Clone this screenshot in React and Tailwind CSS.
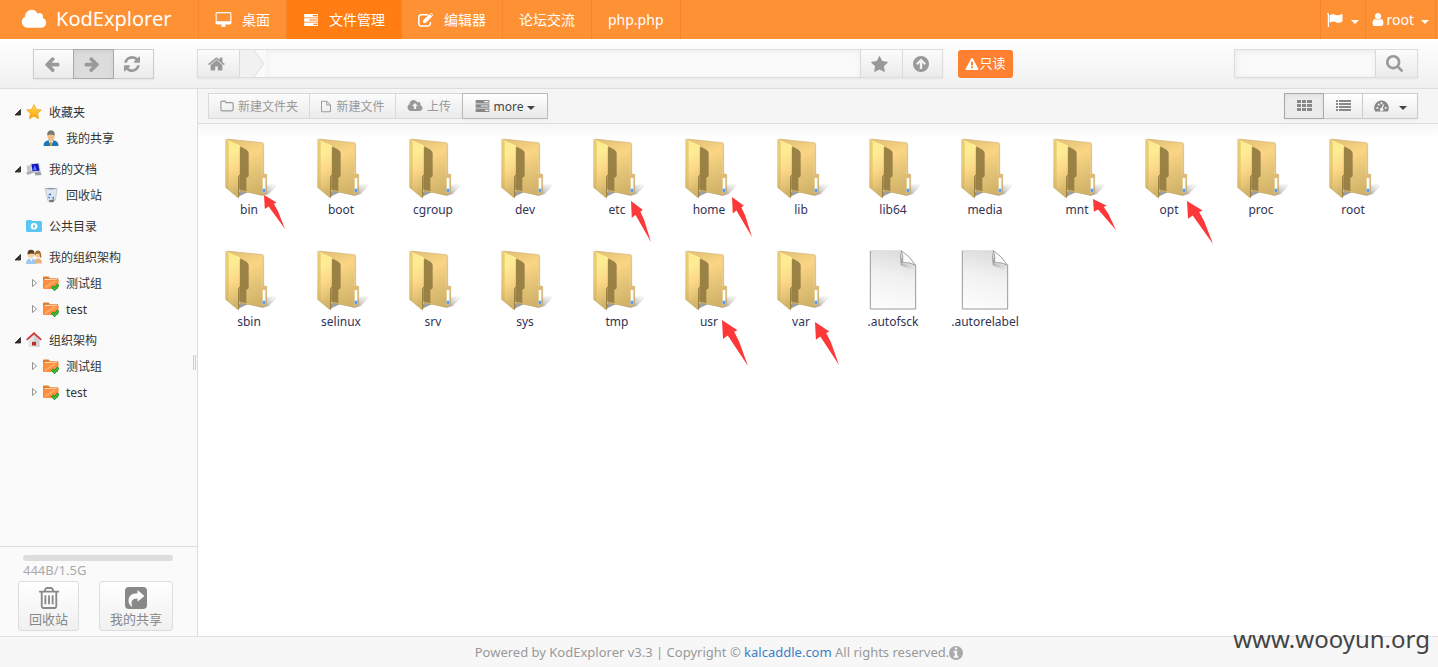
import React from "react";

const FONT = "font-['Noto_Sans','Noto_Sans_CJK_SC',sans-serif]";

const GLYPHS = {
  cloud: ["0 0 2048 1792", "M1984 1152q0 159-112.5 271.5t-271.5 112.5h-1088q-185 0-316.5-131.5t-131.5-316.5q0-132 71-241.5t187-163.5q-2-28-2-43 0-212 150-362t362-150q158 0 286.5 88t187.5 230q70-62 166-62 106 0 181 75t75 181q0 75-41 138 129 30 213 134.5t84 239.5z"],
  cloudUpload: ["0 128 2048 1536", "M1984 1152q0 159-112.5 271.5t-271.5 112.5h-1088q-185 0-316.5-131.5t-131.5-316.5q0-132 71-241.5t187-163.5q-2-28-2-43 0-212 150-362t362-150q158 0 286.5 88t187.5 230q70-62 166-62 106 0 181 75t75 181q0 75-41 138 129 30 213 134.5t84 239.5zM1024 500L660 890H880V1280H1168V890H1388Z"],
  desktop: ["0 0 1920 1792", "M1728 992v-832q0-13-9.5-22.5t-22.5-9.5h-1472q-13 0-22.5 9.5t-9.5 22.5v832q0 13 9.5 22.5t22.5 9.5h1472q13 0 22.5-9.5t9.5-22.5zm128-832v1088q0 66-47 113t-113 47h-544q0 37 16 77.5t32 71 16 43.5q0 26-19 45t-45 19h-384q-26 0-45-19t-19-45q0-14 16-44t32-70 16-78h-544q-66 0-113-47t-47-113v-1088q0-66 47-113t113-47h1472q66 0 113 47t47 113z"],
  tasks: ["0 0 16 14", "M0 0H16V4H0ZM10 1.3V2.7H15V1.3ZM0 5H16V9H0ZM6 6.3V7.7H15V6.3ZM0 10H16V14H0ZM11 11.3V12.7H15V11.3Z"],
  left: ["64 64 1664 1664", "M1664 896v128q0 53-32.5 90.5t-84.5 37.5h-704l293 294q38 36 38 90t-38 90l-75 76q-37 37-90 37-52 0-91-37l-651-652q-37-37-37-90 0-52 37-91l651-650q38-38 91-38 52 0 90 38l75 74q38 38 38 91t-38 91l-293 293h704q52 0 84.5 37.5t32.5 90.5z"],
  right: ["64 64 1664 1664", "M1600 960q0 54-37 91l-651 651q-39 37-91 37-51 0-90-37l-75-75q-38-38-38-91t38-91l293-293h-704q-52 0-84.5-37.5t-32.5-90.5v-128q0-53 32.5-90.5t84.5-37.5h704l-293-294q-38-36-38-90t38-90l75-75q38-38 90-38 53 0 91 38l651 651q37 35 37 90z"],
  refresh: ["128 128 1536 1536", "M1639 1056q0 5-1 7-64 268-268 434.5t-478 166.5q-146 0-282.5-55t-243.5-157l-129 129q-19 19-45 19t-45-19-19-45v-448q0-26 19-45t45-19h448q26 0 45 19t19 45-19 45l-137 137q71 66 161 102t187 36q134 0 250-65t186-179q11-17 53-117 8-23 30-23h192q13 0 22.5 9.5t9.5 22.5zm25-800v448q0 26-19 45t-45 19h-448q-26 0-45-19t-19-45 19-45l138-138q-148-137-349-137-134 0-250 65t-186 179q-11 17-53 117-8 23-30 23h-199q-13 0-22.5-9.5t-9.5-22.5v-7q65-268 270-434.5t480-166.5q146 0 284 55.5t245 156.5l130-129q19-19 45-19t45 19 19 45z"],
  home: ["64 128 1664 1536", "M1472 992v480q0 26-19 45t-45 19h-384v-384h-256v384h-384q-26 0-45-19t-19-45v-480q0-1 .5-3t.5-3l575-474 575 474q1 2 1 6zm223-69l-62 74q-8 9-21 11h-3q-13 0-21-7l-692-577-692 577q-12 8-24 7-13-2-21-11l-62-74q-8-10-7-23.5t11-21.5l719-599q32-26 76-26t76 26l244 204v-195q0-14 9-23t23-9h192q14 0 23 9t9 23v408l219 182q10 8 11 21.5t-7 23.5z"],
  star: ["64 32 1664 1600", "M1728 647q0 22-26 48l-363 354 86 500q1 7 1 20 0 21-10.5 35.5t-30.5 14.5q-19 0-40-12l-449-236-449 236q-22 12-40 12-21 0-31.5-14.5t-10.5-35.5q0-6 2-20l86-500-364-354q-25-27-25-48 0-37 56-46l502-73 225-455q19-41 49-41t49 41l225 455 502 73q56 9 56 46z"],
  up: ["0 0 16 16", "M8 0a8 8 0 1 0 0 16a8 8 0 0 0 0-16ZM8 2.5L13 7.5L11.5 9L9.2 6.8V13H6.8V6.8L4.5 9L3 7.5Z"],
  search: ["64 128 1664 1664", "M1216 832q0-185-131.5-316.5t-316.5-131.5-316.5 131.5-131.5 316.5 131.5 316.5 316.5 131.5 316.5-131.5 131.5-316.5zm512 832q0 52-38 90t-90 38q-54 0-90-38l-343-342q-179 124-399 124-143 0-273.5-55.5t-225-150-150-225-55.5-273.5 55.5-273.5 150-225 225-150 273.5-55.5 273.5 55.5 225 150 150 225 55.5 273.5q0 220-124 399l343 343q37 37 37 90z"],
  warning: ["0 0 1792 1664", "M1024 1375v-190q0-14-9.5-23.5t-22.5-9.5h-192q-13 0-22.5 9.5t-9.5 23.5v190q0 14 9.5 23.5t22.5 9.5h192q13 0 22.5-9.5t9.5-23.5zm-2-374l18-459q0-12-10-19-13-11-24-11h-220q-11 0-24 11-10 7-10 21l17 457q0 10 10 16.5t24 6.5h185q14 0 23.5-6.5t10.5-16.5zm-14-934l768 1408q35 63-2 126-17 29-46.5 46t-63.5 17h-1536q-34 0-63.5-17t-46.5-46q-37-63-2-126l768-1408q17-31 47-49t65-18 65 18 47 49z"],
  user: ["256 128 1280 1536", "M1536 1399q0 109-62.5 187t-150.5 78h-854q-88 0-150.5-78t-62.5-187q0-85 8.5-160.5t31.5-152 58.5-131 94-89 134.5-34.5q131 128 313 128t313-128q76 0 134.5 34.5t94 89 58.5 131 31.5 152 8.5 160.5zm-256-887q0 159-112.5 271.5t-271.5 112.5-271.5-112.5-112.5-271.5 112.5-271.5 271.5-112.5 271.5 112.5 112.5 271.5z"],
  flag: ["0 0 16 14", "M0 1a1 1 0 0 1 2 0V14H0.8V2ZM2.5 2.2C4.5 1 6.5 .8 8.5 1.8C10.5 2.8 12.500 2.200 14.500 1.200C15.200 .9 15.500 1.200 15.500 1.700V8.600C13 10 11 10.200 9 9.200C7 8.200 5 8.500 2.500 9.800Z"],
  th: ["0 0 15 12", "M0 0H4V3H0ZM5 0H9V3H5ZM10 0H15V3H10ZM0 4H4V7H0ZM5 4H9V7H5ZM10 4H15V7H10ZM0 8H4V11H0ZM5 8H9V11H5ZM10 8H15V11H10Z"],
  list: ["0 0 15 12", "M0 0H2V2H0ZM3 0H15V2H3ZM0 3H2V5H0ZM3 3H15V5H3ZM0 6H2V8H0ZM3 6H15V8H3ZM0 9H2V11H0ZM3 9H15V11H3Z"],
  trash: ["192 128 1408 1536", "M704 736v576q0 14-9 23t-23 9h-64q-14 0-23-9t-9-23v-576q0-14 9-23t23-9h64q14 0 23 9t9 23zm256 0v576q0 14-9 23t-23 9h-64q-14 0-23-9t-9-23v-576q0-14 9-23t23-9h64q14 0 23 9t9 23zm256 0v576q0 14-9 23t-23 9h-64q-14 0-23-9t-9-23v-576q0-14 9-23t23-9h64q14 0 23 9t9 23zm128 724v-948h-896v948q0 22 7 40.5t14.5 27 10.5 8.5h832q3 0 10.5-8.5t14.5-27 7-40.5zm-672-1076h448l-48-117q-7-9-17-11h-317q-10 2-17 11zm928 32v64q0 14-9 23t-23 9h-96v948q0 83-47 143.5t-113 60.500h-832q-66 0-113-58.500t-47-141.500v-952h-96q-14 0-23-9t-9-23v-64q0-14 9-23t23-9h309l70-167q15-37 54-63t79-26h320q40 0 79 26t54 63l70 167h309q14 0 23 9t9 23z"],
  share: ["0 0 22 22", "M4 0H18a4 4 0 0 1 4 4V18a4 4 0 0 1-4 4H4a4 4 0 0 1-4-4V4a4 4 0 0 1 4-4ZM12.500 3V6.200C6.500 6.200 3.500 9 3.500 13.500C3.500 16 4.500 18 6.500 19.500C7 19.800 7.500 19.500 7.200 19C5.500 15 7 11.500 12.500 11.500V14.800L19.500 9Z"],
  info: ["128 128 1536 1536", "M1152 1376v-160q0-14-9-23t-23-9h-96v-512q0-14-9-23t-23-9h-320q-14 0-23 9t-9 23v160q0 14 9 23t23 9h96v320h-96q-14 0-23 9t-9 23v160q0 14 9 23t23 9h448q14 0 23-9t9-23zm-128-896v-160q0-14-9-23t-23-9h-192q-14 0-23 9t-9 23v160q0 14 9 23t23 9h192q14 0 23-9t9-23zm640 416q0 209-103 385.500t-279.500 279.500-385.500 103-385.500-103-279.500-279.500-103-385.500 103-385.500 279.500-279.500 385.500-103 385.500 103 279.500 279.500 103 385.500z"],
  gauge: ["0 0 16 13", "M8 .5A8 8 0 0 0 1.200 12.500H14.800A8 8 0 0 0 8 .5ZM2.500 7.500h2v2h-2ZM4 4h2v2H4ZM7 2.500h2v2H7ZM11.500 7.500h2v2h-2ZM9.800 4.500L11 5L9.300 8.800A1.800 1.800 0 1 1 8 8.400Z"],
};

function Icon({ name, className }) {
  const [viewBox, d] = GLYPHS[name];
  return (
    <svg viewBox={viewBox} className={`shrink-0 ${className}`} fill="currentColor" fillRule="evenodd" aria-hidden="true">
      <path d={d} />
    </svg>
  );
}

function OutlineIcon({ d, className = "h-[14px] w-[14px]" }) {
  return (
    <svg viewBox="0 0 16 16" className={`shrink-0 ${className}`} fill="none" stroke="currentColor" strokeWidth="1.3" strokeLinejoin="round" aria-hidden="true">
      <path d={d} />
    </svg>
  );
}

function EditIcon() {
  return (
    <svg viewBox="0 0 16 14" className="h-[14px] w-4 shrink-0" aria-hidden="true">
      <path d="M10 1.700H3.200A2.400 2.400 0 0 0 .8 4.100V10.600A2.400 2.400 0 0 0 3.200 13H10A2.400 2.400 0 0 0 12.400 10.600V9" fill="none" stroke="currentColor" strokeWidth="1.500" />
      <path d="M5 7.500L11.600 .9L14.200 3.500L7.600 10H5ZM12.300 .3Q13 -.2 13.800 .5L15 1.700Q15.500 2.300 14.900 2.900Z" fill="currentColor" />
    </svg>
  );
}

function Caret({ className = "" }) {
  return (
    <svg viewBox="0 0 8 4" className={`h-1 w-2 shrink-0 ${className}`} fill="currentColor" aria-hidden="true">
      <path d="M0 0H8L4 4Z" />
    </svg>
  );
}

function FolderArt() {
  return (
    <svg viewBox="54 40 186 180" className="h-[60px] w-[62px]" aria-hidden="true">
      <defs>
        <linearGradient id="folderFront" x1="0" y1="0" x2="0.15" y2="1">
          <stop offset="0" stopColor="#fde98f" />
          <stop offset="0.3" stopColor="#feec94" />
          <stop offset="0.6" stopColor="#fbd888" />
          <stop offset="1" stopColor="#d2b468" />
        </linearGradient>
        <linearGradient id="folderBack" x1="0.2" y1="0" x2="0.5" y2="1">
          <stop offset="0" stopColor="#e2c276" />
          <stop offset="0.35" stopColor="#fad585" />
          <stop offset="0.65" stopColor="#e6c578" />
          <stop offset="1" stopColor="#d2b369" />
        </linearGradient>
        <linearGradient id="folderShade" x1="0.4" y1="0.7" x2="1" y2="0.2">
          <stop offset="0" stopColor="#777" stopOpacity="0.7" />
          <stop offset="1" stopColor="#aaa" stopOpacity="0" />
        </linearGradient>
      </defs>
      <path d="M112 218L145 202L188 213L205 209L222 192L240 170Q214 176 198 184L190 200L120 195Z" fill="url(#folderShade)" />
      <path d="M80 43L187 54Q191 55 191 60V148L200 149V205L188 212L120 198Z" fill="url(#folderBack)" stroke="#c2a25a" strokeWidth="1.500" />
      <path d="M187 57V149" stroke="#e9d08f" strokeWidth="2.500" />
      <path d="M119 64L139 75Q145 79 146 86V155L139 160V199L118 195Z" fill="#9a8145" />
      <path d="M76 43L116 60Q122 63 122 69V149L117 155V218H112L76 187Z" fill="url(#folderFront)" />
      <path d="M121 68V149L116 156V218" fill="none" stroke="#82692f" strokeWidth="2.500" />
      <path d="M76 43L86 50V196L76 187Z" fill="#c9a958" opacity="0.45" />
      <path d="M76 187L112 218H117" fill="none" stroke="#b5964d" strokeWidth="1.500" />
      <path d="M188 160H196V203H188Z" fill="#fff" />
      <path d="M188 192H196V203H188Z" fill="#5b9cf5" />
    </svg>
  );
}

function FileArt() {
  return (
    <svg viewBox="546 46 186 180" className="h-[60px] w-[62px]" aria-hidden="true">
      <defs>
        <linearGradient id="paper" x1="0.6" y1="0" x2="0.4" y2="1">
          <stop offset="0" stopColor="#dcdcdc" />
          <stop offset="0.45" stopColor="#f1f1f1" />
          <stop offset="1" stopColor="#fcfcfc" />
        </linearGradient>
        <linearGradient id="curlShade" x1="0.3" y1="0.3" x2="0.8" y2="1">
          <stop offset="0" stopColor="#777" stopOpacity="0.7" />
          <stop offset="1" stopColor="#ccc" stopOpacity="0" />
        </linearGradient>
      </defs>
      <path d="M571 48H664L706 90V223H571Z" fill="url(#paper)" />
      <path d="M660 50L668 88L706 92V112L662 92Z" fill="url(#curlShade)" />
      <path d="M571 48V223H707V91" fill="none" stroke="#9a9a9a" strokeWidth="3" />
      <path d="M571 48H664" stroke="#d5d5d5" strokeWidth="2" />
      <path d="M664 48Q670 64 668 84Q688 82 706 91Q690 64 664 48Z" fill="#fafafa" stroke="#8c8c8c" strokeWidth="2.500" />
    </svg>
  );
}

function RedArrow({ className }) {
  return (
    <svg viewBox="0 0 77 136" preserveAspectRatio="none" className={`absolute z-10 ${className}`} aria-hidden="true">
      <path d="M0 0L46 30L36 35L51 64L77 136L17 46L3 56Z" fill="#fd3838" />
    </svg>
  );
}

const ENTRIES = [
  { name: "bin", arrow: "left-[61px] top-[60px] w-[21px] h-[34px]" },
  { name: "boot" },
  { name: "cgroup" },
  { name: "dev" },
  { name: "etc", arrow: "left-[60px] top-[66px] w-[20px] h-[41px]" },
  { name: "home", arrow: "left-[69px] top-[62px] w-[20px] h-[40px]" },
  { name: "lib" },
  { name: "lib64" },
  { name: "media" },
  { name: "mnt", arrow: "left-[62px] top-[64px] w-[23px] h-[31px]" },
  { name: "opt", arrow: "left-[64px] top-[66px] w-[26px] h-[43px]" },
  { name: "proc" },
  { name: "root" },
  { name: "sbin" },
  { name: "selinux" },
  { name: "srv" },
  { name: "sys" },
  { name: "tmp" },
  { name: "usr", arrow: "left-[59px] top-[73px] w-[26px] h-[46px]" },
  { name: "var", arrow: "left-[60px] top-[75px] w-[24px] h-[43px]" },
  { name: ".autofsck", file: true },
  { name: ".autorelabel", file: true },
];

const TREE_ART = {
  star: (
    <>
      <defs>
        <linearGradient id="gold" x1="0" y1="0" x2="0" y2="1">
          <stop offset="0" stopColor="#ffe14a" />
          <stop offset="1" stopColor="#ff9d0a" />
        </linearGradient>
      </defs>
      <path d="M8 .6L10.200 5.300L15.400 5.900L11.600 9.500L12.600 14.800L8 12.200L3.400 14.800L4.400 9.500L.6 5.900L5.800 5.300Z" fill="url(#gold)" stroke="#f0a020" strokeWidth=".7" strokeLinejoin="round" />
    </>
  ),
  person: (
    <>
      <path d="M.5 16Q.5 11 5.500 10.200H10.500Q15.500 11 15.500 16Z" fill="#1c78b4" />
      <path d="M5.500 10.500L8 16L10.500 10.500Z" fill="#fff" />
      <path d="M7.300 11.500h1.400l.5 4.500H6.800Z" fill="#d89a28" />
      <path d="M4.500 4V7Q5 10.800 8 11Q11 10.800 11.500 7V4Z" fill="#f2bd82" />
      <path d="M4.300 5.500Q3.800 .5 8 .3Q12.200 .5 11.700 5.500Q8 3.500 4.300 5.500Z" fill="#777" />
    </>
  ),
  computer: (
    <>
      <path d="M.5 5L5 4V10L1.500 11Z" fill="#c3c7cc" />
      <path d="M0 11.500L6 9.500L8 11.500L1.500 14Z" fill="#a9adb3" />
      <path d="M4.500 2.500L13 2L14.500 10.500L6 11Z" fill="#c9ccd4" />
      <path d="M5.500 3.200L12.200 2.800L13.500 9.800L6.500 10.200Z" fill="#1418c4" />
      <path d="M8.500 4L11 9.300H7Z" fill="#5d7cff" />
      <path d="M8 11.500L14.500 10.500L15.500 14L9.500 14.500Z" fill="#9aa0a8" />
    </>
  ),
  bin: (
    <>
      <path d="M2 1.500L14 1.500L12.500 13Q9 17 5 14Z" fill="#dfe6ef" stroke="#b5bdc8" strokeWidth=".7" />
      <path d="M2 1.500Q8 -.2 14 1.500Q8 3.500 2 1.500Z" fill="#8f9dae" />
      <path d="M5 8L7.200 6L8.500 8.200ZM8.500 11L11 9.500V12ZM4.800 10L6.600 9.500L6.900 12Z" fill="#397de0" />
      <path d="M6 13.200L11.500 12.200L10.500 15H6.500Z" fill="#777" />
    </>
  ),
  camera: (
    <>
      <path d="M0 3.500Q0 2 1.500 2H5L6.500 3H14.500Q16 3 16 4.500V12.500Q16 14 14.500 14H1.500Q0 14 0 12.500Z" fill="#5cc6f2" />
      <circle cx="8" cy="8.300" r="3.300" fill="#fff" />
      <ellipse cx="8" cy="8.300" rx="1" ry="1.800" fill="#5cc6f2" />
    </>
  ),
  people: (
    <>
      <path d="M8 14.500Q8 9.500 12 9.500Q16 9.500 16 14.500Z" fill="#e9b37a" />
      <circle cx="12" cy="5.500" r="3" fill="#f4c894" />
      <path d="M8.800 7Q8.500 1.500 12 1.500Q15.500 1.500 15.300 9L14 8L13.500 4.500L9.800 5Z" fill="#a2672e" />
      <path d="M0 15Q0 9.500 5 9.500Q10 9.500 10 15Z" fill="#9cc8ef" />
      <path d="M4 9.500H6.500L5.200 13Z" fill="#fff" />
      <circle cx="5" cy="5.500" r="3.300" fill="#f8cf9d" />
      <path d="M1.600 5.500Q1 .8 5 .8Q9 .8 8.500 5.500Q7 3.500 1.600 5.500Z" fill="#5d4023" />
    </>
  ),
  house: (
    <>
      <path d="M2.500 7.500L8 2.500L13.500 7.500V15H2.500Z" fill="#e3e4e6" />
      <path d="M8 2.500L13.500 7.500V15H10V9H8Z" fill="#cfd1d5" />
      <path d="M.7 7.800L8 1.300L15.300 7.800" fill="none" stroke="#d2393b" strokeWidth="1.800" />
      <path d="M6 9.800h4V13.500H6Z" fill="#b92c2d" />
    </>
  ),
  group: (
    <>
      <path d="M0 2.500Q0 1.500 1 1.500H5.500L7 3H14Q15 3 15 4V13.500H0Z" fill="#e07b2c" />
      <path d="M1.500 4L14 3.500V5H1.500Z" fill="#fbe3cc" />
      <path d="M0 5L15.800 4.500L15 13Q15 14 14 14H1.500Q.5 14 .5 13Z" fill="#ff8f3f" />
      <path d="M2 12.500L12 6" stroke="#ffac6b" strokeWidth="2" />
      <path d="M9 11.500L11.500 14L15.500 9.500" fill="none" stroke="#118a1c" strokeWidth="3" />
      <path d="M9 11.500L11.500 14L15.500 9.500" fill="none" stroke="#3fc23b" strokeWidth="1.600" />
    </>
  ),
};

const TREE = [
  { label: "收藏夹", art: "star", open: true, children: [{ label: "我的共享", art: "person" }] },
  { label: "我的文档", art: "computer", open: true, children: [{ label: "回收站", art: "bin" }] },
  { label: "公共目录", art: "camera", children: [] },
  { label: "我的组织架构", art: "people", open: true, children: [{ label: "测试组", art: "group", closed: true }, { label: "test", art: "group", closed: true }] },
  { label: "组织架构", art: "house", open: true, children: [{ label: "测试组", art: "group", closed: true }, { label: "test", art: "group", closed: true }] },
];

function TreeRow({ node, child }) {
  return (
    <a href="#" className={`flex h-[26px] items-center text-xs text-[#333] ${child ? "pl-[30px]" : "pl-[13px]"}`}>
      <svg viewBox="0 0 8 8" className="mr-[5px] h-2 w-2 shrink-0" aria-hidden="true">
        {node.open && <path d="M7.500 1.500V7H2Z" fill="#333" stroke="#222" strokeWidth=".8" />}
        {node.closed && <path d="M2.500 .5L6.500 4L2.500 7.500Z" fill="#fff" stroke="#888" strokeWidth=".9" />}
      </svg>
      <svg viewBox="0 0 16 16" className="mr-[7px] h-4 w-4 shrink-0" aria-hidden="true">
        {TREE_ART[node.art]}
      </svg>
      <span className="pt-px">{node.label}</span>
    </a>
  );
}

function NavItem({ children, active }) {
  return (
    <a href="#" className={`flex items-center gap-[10px] border-r border-[#f9852a] px-4 text-sm text-white ${active ? "bg-[#ff7d12]" : ""}`}>
      {children}
    </a>
  );
}

const BTN = "flex items-center justify-center border-[#d9d9d9] bg-linear-to-b from-[#fcfcfc] to-[#ebebeb] text-[#999]";

export default function App() {
  return (
    <div className={`relative flex min-h-screen flex-col bg-white ${FONT}`}>
      <header className="flex h-[39px] items-stretch bg-[#ff9135] text-white">
        <a href="#" className="flex w-[199px] shrink-0 items-center gap-[9px] border-r border-[#f9852a] pb-px pl-[21px] text-xl">
          <Icon name="cloud" className="h-[23px] w-[26px]" />
          <span>KodExplorer</span>
        </a>
        <nav className="flex">
          <NavItem><Icon name="desktop" className="h-4 w-[17px]" />桌面</NavItem>
          <NavItem active><Icon name="tasks" className="h-3 w-4" />文件管理</NavItem>
          <NavItem><EditIcon />编辑器</NavItem>
          <NavItem>论坛交流</NavItem>
          <NavItem>php.php</NavItem>
        </nav>
        <div className="ml-auto flex pr-[2px]">
          <button type="button" aria-label="Language" className="flex items-center gap-2 border-l border-[#f9852a] px-[6px]">
            <Icon name="flag" className="h-[14px] w-4" />
            <Caret className="mt-1" />
          </button>
          <button type="button" className="flex items-center gap-[3px] border-x border-[#f9852a] px-[6px] text-sm">
            <Icon name="user" className="h-[13px] w-3" />
            root
            <Caret className="ml-1 mt-1" />
          </button>
        </div>
      </header>

      <div className="flex h-[50px] items-start border-b border-[#ddd] bg-linear-to-b from-white to-[#f0f0f0] pt-[10px]">
        <div className="flex w-[197px] shrink-0 pl-[33px]">
          <div className="flex h-[30px] border border-[#ccc] shadow-xs">
            <button type="button" aria-label="Back" className={`${BTN} w-[39px] pr-1`}><Icon name="left" className="h-4 w-4" /></button>
            <button type="button" aria-label="Forward" className="-my-px flex w-[41px] items-center justify-center border border-[#aaa] bg-[#dcdcdc] pr-1 text-[#999] shadow-inner"><Icon name="right" className="h-4 w-4" /></button>
            <button type="button" aria-label="Refresh" className={`${BTN} w-[39px] pr-1`}><Icon name="refresh" className="h-4 w-4" /></button>
          </div>
        </div>
        <div className="flex h-[29px] min-w-0 flex-1 border border-[#ddd] shadow-xs">
          <button type="button" aria-label="Home" className={`${BTN} w-[42px] border-r pr-1`}><Icon name="home" className="h-4 w-[17px]" /></button>
          <svg viewBox="0 0 26 27" className="h-[27px] w-[26px] shrink-0 bg-[#fafafa]" aria-hidden="true">
            <path d="M0 0H14L24 13.500L14 27H0Z" fill="#f1f1f1" />
            <path d="M14 0L24 13.500L14 27" fill="none" stroke="#ddd" />
          </svg>
          <input aria-label="Path" className="min-w-0 flex-1 bg-[#fafafa] shadow-[inset_0_2px_6px_#eeeeee] outline-none" />
          <button type="button" aria-label="Favorite" className={`${BTN} w-[42px] border-l pr-1`}><Icon name="star" className="h-4 w-[17px]" /></button>
          <button type="button" aria-label="Up one level" className={`${BTN} w-[40px] border-l pr-1`}><Icon name="up" className="h-4 w-4" /></button>
        </div>
        <div className="flex w-[291px] shrink-0 pl-[15px]">
          <button type="button" className="mt-px flex h-7 w-[55px] items-center justify-center rounded-[3px] bg-[#ff8031] text-[13px] text-white">
            <Icon name="warning" className="h-3 w-[14px]" />只读
          </button>
        </div>
        <div className="mr-5 flex h-[29px] w-[184px] shrink-0 border border-[#ddd] shadow-xs">
          <input aria-label="Search" className="min-w-0 flex-1 bg-[#fafafa] shadow-[inset_1px_1px_6px_#e8e8e8] outline-none" />
          <button type="button" aria-label="Run search" className={`${BTN} w-[42px] border-l pr-1`}><Icon name="search" className="h-[17px] w-[17px]" /></button>
        </div>
      </div>

      <div className="flex flex-1">
        <aside className="flex w-[198px] shrink-0 flex-col border-r border-[#ddd] bg-[#fafafa]">
          <div className="flex flex-1 items-center">
            <nav className="flex flex-1 flex-col gap-[5px] self-start pt-[10px]">
              {TREE.map((node) => (
                <div key={node.label}>
                  <TreeRow node={node} />
                  {node.children.map((c) => <TreeRow key={c.label} node={c} child />)}
                </div>
              ))}
            </nav>
            <div className="mt-[90px] mr-px h-[15px] w-[3px] border-x border-[#ccc]" />
          </div>
          <div className="flex h-[90px] flex-col border-t border-[#ddd] pt-2">
            <div className="ml-[23px] h-[6px] w-[150px] rounded-full bg-[#ddd]" />
            <span className="ml-[23px] h-5 text-[13px] leading-[18px] text-[#aaa]">444B/1.5G</span>
            <div className="ml-[18px] flex gap-5 text-[13px] leading-4 text-[#888]">
              <button type="button" className="flex h-[50px] w-[61px] flex-col items-center rounded-[3px] border border-[#ddd] bg-linear-to-b from-white to-[#f0f0f0] pt-[5px]">
                <Icon name="trash" className="mb-[2px] h-[22px] w-5" />回收站
              </button>
              <button type="button" className="flex h-[50px] w-[74px] flex-col items-center rounded-[3px] border border-[#ddd] bg-linear-to-b from-white to-[#f0f0f0] pt-[5px]">
                <Icon name="share" className="mb-[2px] h-[22px] w-[22px]" />我的共享
              </button>
            </div>
          </div>
        </aside>

        <main className="flex min-w-0 flex-1 flex-col">
          <div className="flex h-[35px] items-center justify-between border-b border-[#ddd] bg-[#f5f5f5] pr-5 pl-[10px]">
            <div className="flex h-[26px] text-xs">
              <button type="button" className={`${BTN} gap-1 border w-[102px]`}>
                <OutlineIcon d="M1 4Q1 2.500 2.500 2.500H5.500Q6.800 2.500 6.800 4.200H13.500Q15 4.200 15 5.700V12Q15 13.500 13.500 13.500H2.500Q1 13.500 1 12Z" /><span className="pt-px">新建文件夹</span>
              </button>
              <button type="button" className={`${BTN} gap-1 border-y border-r w-[86px]`}>
                <OutlineIcon className="h-[13px] w-3" d="M2 1H9L14 6V15H2ZM9 1V6H14" /><span className="pt-px">新建文件</span>
              </button>
              <button type="button" className={`${BTN} gap-1 border-y w-[66px]`}>
                <Icon name="cloudUpload" className="h-3 w-4" /><span className="pt-px">上传</span>
              </button>
              <button type="button" className="flex w-[86px] items-center justify-center gap-1 border border-[#bbb] bg-linear-to-b from-white to-[#e8e8e8] text-[#444] shadow-xs">
                <Icon name="tasks" className="h-3 w-[15px] text-[#888]" /><span className="pt-px">more</span><Caret className="mt-1" />
              </button>
            </div>
            <div className="flex h-[26px] shadow-xs">
              <button type="button" aria-label="Grid view" className="flex w-10 items-center justify-center border border-[#aaa] bg-[#ececec] text-[#888] shadow-inner"><Icon name="th" className="h-3 w-[15px]" /></button>
              <button type="button" aria-label="List view" className="flex w-[39px] items-center justify-center border-y border-r border-[#ccc] bg-linear-to-b from-white to-[#ebebeb] text-[#888]"><Icon name="list" className="h-3 w-[15px]" /></button>
              <button type="button" aria-label="Theme" className="flex w-[55px] items-center justify-center gap-[10px] border-y border-r border-[#ccc] bg-linear-to-b from-white to-[#ebebeb] text-[#888]"><Icon name="gauge" className="h-3 w-[15px]" /><Caret className="mt-1 text-[#444]" /></button>
            </div>
          </div>
          <div className="flex flex-1 flex-wrap content-start bg-[linear-gradient(to_bottom,#f6f6f6,#ffffff_14px)] pt-[11px] pl-[5px]">
            {ENTRIES.map((e) => (
              <div key={e.name} className="relative flex h-[112px] w-[92px] flex-col items-center pt-[3px] text-xs text-[#335]">
                {e.file ? <FileArt /> : <FolderArt />}
                <span className="mt-1 leading-4">{e.name}</span>
                {e.arrow && <RedArrow className={e.arrow} />}
              </div>
            ))}
          </div>
        </main>
      </div>

      <footer className="flex h-[31px] items-center justify-center border-t border-[#e2e2e2] bg-[#f7f7f7] pt-[2px] text-[13px] text-[#999]">
        <span>Powered by KodExplorer v3.3 | Copyright © <a href="#" className="text-[#3b7fc4]">kalcaddle.com</a> All rights reserved.</span>
        <Icon name="info" className="h-[14px] w-[14px] text-[#aaa]" />
      </footer>
      <div className="absolute right-2 bottom-2 text-2xl leading-[40px] text-[#444]">www.wooyun.org</div>
    </div>
  );
}
